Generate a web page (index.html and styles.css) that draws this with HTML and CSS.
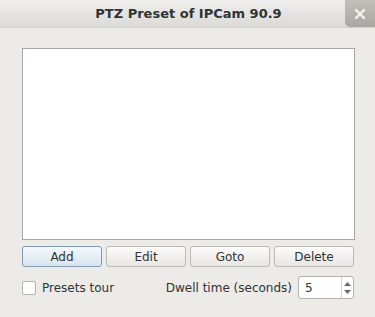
FILE: index.html
```html
<!DOCTYPE html>
<html>
<head>
<meta charset="utf-8">
<link rel="stylesheet" href="styles.css">
</head>
<body>
<div class="window">
  <div class="titlebar">
    <div class="title">PTZ Preset of IPCam 90.9</div>
    <div class="close">
      <svg width="12" height="12" viewBox="0 0 12 12"><path d="M2 2 L10 10 M10 2 L2 10" stroke="#f4f3f1" stroke-width="2.4" stroke-linecap="round"/></svg>
    </div>
  </div>
  <div class="content">
    <div class="list"></div>
    <div class="buttons">
      <button class="btn focus">Add</button>
      <button class="btn">Edit</button>
      <button class="btn">Goto</button>
      <button class="btn">Delete</button>
    </div>
    <div class="bottom">
      <label class="check"><span class="box"></span>Presets tour</label>
      <div class="dwell">
        <span class="dlabel">Dwell time (seconds)</span>
        <div class="spin">
          <span class="val">5</span>
          <div class="arrows">
            <svg width="9" height="18" viewBox="0 0 9 18"><path d="M1 7 L4.5 3 L8 7 Z" fill="#6e6c68"/><path d="M1 11 L4.5 15 L8 11 Z" fill="#6e6c68"/></svg>
          </div>
        </div>
      </div>
    </div>
  </div>
</div>
</body>
</html>
```
FILE: styles.css
```css
html, body {
  margin: 0;
  padding: 0;
  background: #edebe7;
}
.window {
  width: 375px;
  height: 317px;
  background: #edebe7;
  font-family: "DejaVu Sans", sans-serif;
  font-size: 12px;
  color: #2e3436;
  overflow: hidden;
  position: relative;
}
.titlebar {
  height: 28px;
  background: linear-gradient(#efeeec, #dcdad6);
  border-bottom: 1px solid #d3d0cb;
  display: flex;
  align-items: center;
  justify-content: center;
  position: relative;
  box-sizing: border-box;
}
.title {
  font-weight: bold;
  font-size: 13px;
  color: #2e3436;
  margin-left: 2px;
}
.close {
  position: absolute;
  right: 0;
  top: 0;
  width: 30px;
  height: 27px;
  background: linear-gradient(#c3c0bb, #a9a6a1);
  border-bottom-left-radius: 5px;
  display: flex;
  align-items: center;
  justify-content: center;
}
.content {
  padding: 20px 20px 0 22px;
  display: flex;
  flex-direction: column;
}
.list {
  height: 190px;
  background: #ffffff;
  border: 1px solid #a9a7a3;
}
.buttons {
  margin-top: 6px;
  display: grid;
  grid-template-columns: repeat(4, 1fr);
  gap: 4px;
  margin-right: 1px;
}
.btn {
  height: 21px;
  font-family: "DejaVu Sans", sans-serif;
  font-size: 12px;
  color: #2e3436;
  background: linear-gradient(#fbfbfa, #e8e6e2);
  border: 1px solid #bdbab5;
  border-radius: 3px;
  padding: 0;
}
.btn.focus {
  background: linear-gradient(#f4f8fb, #d8e4ee);
  border-color: #7f9bb5;
}
.bottom {
  margin-top: 9px;
  display: flex;
  align-items: center;
  justify-content: space-between;
  margin-right: 1px;
}
.check {
  display: flex;
  align-items: center;
  gap: 6px;
}
.box {
  width: 12px;
  height: 12px;
  background: #fdfdfc;
  border: 1px solid #b5b2ad;
  border-radius: 2px;
}
.dwell {
  display: flex;
  align-items: center;
  gap: 6px;
}
.spin {
  width: 54px;
  height: 21px;
  background: #ffffff;
  border: 1px solid #b5b2ad;
  border-radius: 3px;
  display: flex;
  align-items: center;
  justify-content: space-between;
}
.val {
  padding-left: 6px;
}
.arrows {
  width: 11px;
  height: 21px;
  border-left: 1px solid #d6d4d0;
  display: flex;
  align-items: center;
  justify-content: center;
}
```
